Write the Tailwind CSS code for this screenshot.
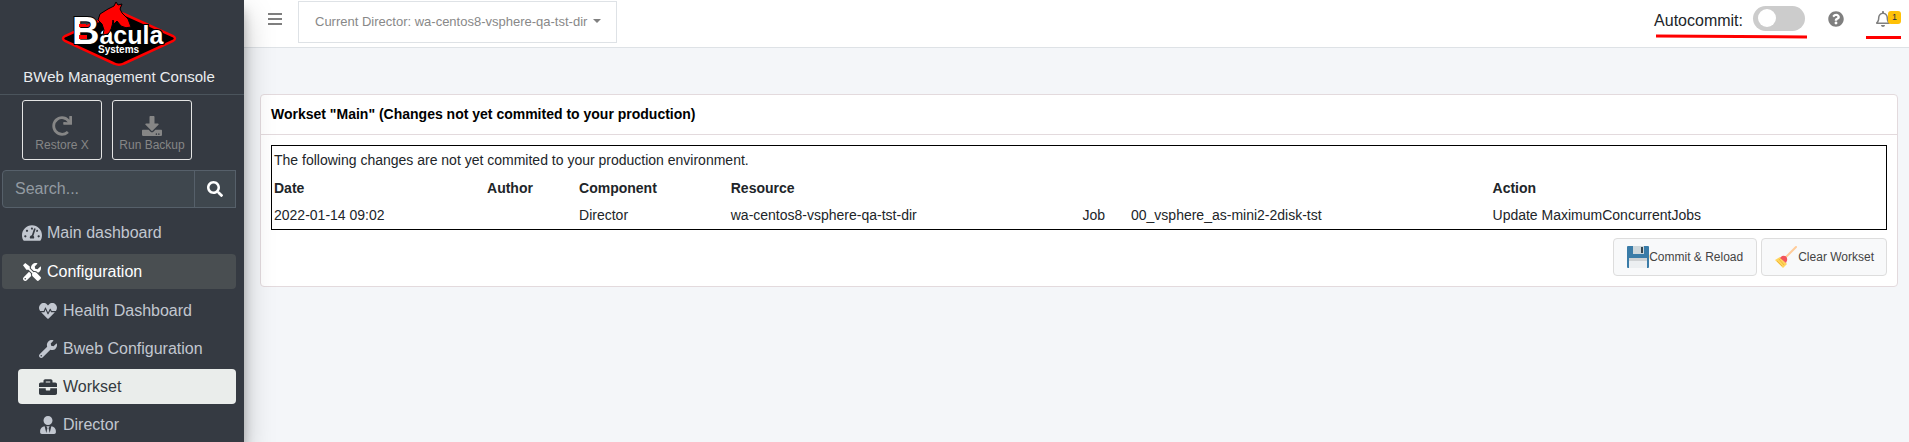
<!DOCTYPE html>
<html lang="en">
<head>
  <meta charset="UTF-8" />
  <meta name="viewport" content="width=device-width, initial-scale=1" />
  <title>BWeb Management Console - Workset</title>
  <script src="https://cdn.jsdelivr.net/npm/@tailwindcss/browser@4"></script>
</head>
<body class="flex min-h-screen overflow-x-hidden bg-[#f4f6f9] font-['Liberation_Sans',Arial,sans-serif] text-[#212529]">

  <!-- Sidebar -->
  <aside class="z-10 flex w-[244px] shrink-0 flex-col overflow-hidden bg-[#353a42] text-[#c2c7d0] shadow-[0_14px_28px_rgba(0,0,0,0.25),0_10px_10px_rgba(0,0,0,0.22)]">
    <a href="#" class="flex h-[95px] shrink-0 flex-col items-center border-b border-[#4b545c] pr-[6px]">
      <svg class="h-[69px] w-[118px]" viewBox="0 0 118 69" role="img" aria-label="Bacula Systems">
        <path d="M5 36 Q1 38.500 5 41 L54 63.500 Q59 66 64 63.500 L113 41 Q117 38.500 113 36 L64 14 Q59 12 54 14Z" fill="#000" stroke="#f00" stroke-width="2.500" />
        <g font-family="Liberation Sans" font-weight="700" fill="#fff" stroke="#000" stroke-width="2" paint-order="stroke">
          <text x="12" y="44"><tspan font-size="38">B</tspan><tspan font-size="25">acula</tspan></text>
          <text x="38" y="53" font-size="10">Systems</text>
        </g>
        <path d="M19 24h7v3h-7zM19 35h8v4h-8z" fill="#f00" />
        <path d="M43 35 L44 30 L42 24 L38 20 L40 14 L48 9 L54 6 L56 2 L58 5 L62 4 L60 9 L62 13 L68 19 L71 27 Q66 29 61 26 L57 21 L54 24 L53 20 Q52 30 48 34Z" fill="#f00" stroke="#000" stroke-linejoin="round" />
      </svg>
      <span class="text-[15px] leading-4 text-[#e9ecef]">BWeb Management Console</span>
    </a>

    <div class="mt-[5px] flex gap-[10px] pl-[22px] text-xs text-[#868686]">
      <button type="button" class="flex h-[60px] w-20 flex-col items-center justify-end rounded-[3px] border border-[#e4e4e4] pb-[5px]">
        <svg class="h-5 w-5" viewBox="0 0 512 512" fill="currentColor"><path d="M500.330 0h-47.410a12 12 0 0 0-12 12.570l4 82.760A247.420 247.420 0 0 0 256 8C119.340 8 7.900 119.530 8 256.190 8.100 393.070 119.100 504 256 504a247.100 247.100 0 0 0 166.180-63.910 12 12 0 0 0 .48-17.430l-34-34a12 12 0 0 0-16.380-.55A176 176 0 1 1 402.100 157.800l-101.530-4.870a12 12 0 0 0-12.570 12v47.410a12 12 0 0 0 12 12h200.330a12 12 0 0 0 12-12V12a12 12 0 0 0-12-12z" /></svg>
        <span class="leading-[18px]">Restore X</span>
      </button>
      <button type="button" class="flex h-[60px] w-20 flex-col items-center justify-end rounded-[3px] border border-[#e4e4e4] pb-[5px] whitespace-nowrap">
        <svg class="h-5 w-5" viewBox="0 0 512 512" fill="currentColor"><path d="M216 0h80c13.300 0 24 10.700 24 24v168h87.700c17.800 0 26.700 21.500 14.100 34.100L269.700 378.300c-7.500 7.500-19.800 7.500-27.300 0L90.100 226.100c-12.600-12.600-3.700-34.100 14.100-34.100H192V24c0-13.300 10.700-24 24-24zm296 376v112c0 13.300-10.700 24-24 24H24c-13.300 0-24-10.700-24-24V376c0-13.300 10.700-24 24-24h146.700l49 49c20.100 20.100 52.500 20.100 72.600 0l49-49H488c13.300 0 24 10.700 24 24zm-124 88c0-11-9-20-20-20s-20 9-20 20 9 20 20 20 20-9 20-20zm64 0c0-11-9-20-20-20s-20 9-20 20 9 20 20 20 20-9 20-20z" /></svg>
        <span class="leading-[18px]">Run Backup</span>
      </button>
    </div>

    <form class="mt-[10px] mr-2 ml-[2px] flex h-[38px]">
      <input type="text" aria-label="Search" placeholder="Search..." class="min-w-0 flex-1 rounded-l border border-[#56606a] bg-[#3f474e] px-3 text-base text-white placeholder:text-[#939ba2]" />
      <button type="submit" aria-label="Search" class="-ml-px flex w-[42px] items-center justify-center border border-[#56606a] bg-[#3f474e] text-white">
        <svg class="h-4 w-4" viewBox="0 0 512 512" fill="currentColor"><path d="M505 442.700L405.300 343c-4.500-4.500-10.600-7-17-7H372c27.600-35.300 44-79.700 44-128C416 93.100 322.900 0 208 0S0 93.100 0 208s93.100 208 208 208c48.300 0 92.700-16.400 128-44v16.300c0 6.400 2.500 12.500 7 17l99.700 99.700c9.400 9.400 24.600 9.400 33.900 0l28.300-28.300c9.400-9.400 9.400-24.600.1-34zM208 336c-70.700 0-128-57.200-128-128 0-70.700 57.200-128 128-128 70.700 0 128 57.200 128 128 0 70.700-57.200 128-128 128z" /></svg>
      </button>
    </form>

    <nav class="mt-[7px] mr-2 ml-[2px] flex flex-col gap-1 text-base">
      <a href="#" class="flex h-[35px] items-center gap-[5px] rounded pl-5">
        <svg class="h-[18px] w-5" viewBox="0 0 576 512" fill="currentColor"><path d="M288 32C128.940 32 0 160.940 0 320c0 52.800 14.250 102.260 39.060 144.800 5.610 9.620 16.300 15.200 27.440 15.200h443c11.140 0 21.830-5.580 27.440-15.200C561.750 422.260 576 372.800 576 320c0-159.060-128.940-288-288-288zm0 64c14.710 0 26.580 10.130 30.320 23.650-1.110 2.260-2.640 4.230-3.450 6.670l-9.220 27.670c-5.130 3.490-10.970 6.010-17.640 6.010-17.670 0-32-14.330-32-32S270.330 96 288 96zM96 384c-17.670 0-32-14.330-32-32s14.330-32 32-32 32 14.330 32 32-14.330 32-32 32zm48-160c-17.670 0-32-14.330-32-32s14.330-32 32-32 32 14.330 32 32-14.330 32-32 32zm246.770-72.410l-61.330 184C343.130 347.330 352 364.540 352 384c0 11.720-3.380 22.550-8.880 32H232.880c-5.500-9.450-8.880-20.280-8.880-32 0-33.940 26.500-61.430 59.900-63.590l61.340-184.010c4.170-12.560 17.730-19.450 30.360-15.170 12.570 4.190 19.350 17.790 15.170 30.360zm14.660 57.200l15.520-46.550c3.470-1.290 7.130-2.230 11.050-2.230 17.670 0 32 14.330 32 32s-14.330 32-32 32c-11.380 0-20.890-6.280-26.570-15.220zM480 384c-17.670 0-32-14.330-32-32s14.330-32 32-32 32 14.330 32 32-14.330 32-32 32z" /></svg>
        Main dashboard
      </a>
      <a href="#" class="flex h-[35px] items-center gap-[5px] rounded bg-[#494e51] pl-5 text-white">
        <svg class="h-[18px] w-5" viewBox="0 0 512 512" fill="currentColor"><path d="M501.100 395.700L384 278.600c-23.100-23.100-57.600-27.600-85.400-13.900L192 158.100V96L64 0 0 64l96 128h62.100l106.600 106.600c-13.600 27.800-9.200 62.300 13.900 85.400l117.100 117.100c14.600 14.600 38.200 14.600 52.700 0l52.700-52.700c14.500-14.600 14.500-38.200 0-52.700zM331.700 225c28.300 0 54.900 11 74.900 31l19.400 19.400c15.800-6.900 30.800-16.500 43.800-29.500 37.100-37.100 49.700-89.300 37.900-136.700-2.200-9-13.500-12.100-20.100-5.500l-74.400 74.400-67.900-11.300L334 98.900l74.400-74.400c6.600-6.600 3.400-17.900-5.700-20.200-47.400-11.700-99.600.9-136.600 37.900-28.500 28.500-41.900 66.100-41.200 103.600l82.100 82.100c8.100-1.900 16.500-2.900 24.700-2.900zm-103.900 82l-56.700-56.700L18.700 402.800c-25 25-25 65.500 0 90.500s65.500 25 90.500 0l123.600-123.600c-7.600-19.900-9.900-41.600-5-62.700zM64 472c-13.200 0-24-10.800-24-24 0-13.300 10.700-24 24-24s24 10.700 24 24c0 13.200-10.700 24-24 24z" /></svg>
        Configuration
      </a>
      <div class="ml-4 flex flex-col gap-[3px]">
        <a href="#" class="flex h-[35px] items-center gap-[5px] rounded pl-5">
          <svg class="h-[18px] w-5" viewBox="0 0 512 512" fill="currentColor"><path d="M320.200 243.800l-49.700 99.400c-6 12.100-23.400 11.700-28.900-.6l-56.900-126.300-30 71.700H60.600l182.500 186.500c7.100 7.300 18.600 7.300 25.700 0L451.400 288H342.300l-22.100-44.200zM473.700 73.900l-2.400-2.500c-51.500-52.600-135.800-52.600-187.400 0L256 100l-27.900-28.500c-51.500-52.700-135.900-52.700-187.400 0l-2.400 2.400C-10.400 123.700-12.500 203 31 256h102.400l35.900-86.200c5.400-12.900 23.600-13.200 29.400-.4l58.200 129.300 49-97.900c5.900-11.800 22.700-11.800 28.600 0l27.600 55.200H481c43.500-53 41.400-132.300-7.300-182.100z" /></svg>
          Health Dashboard
        </a>
        <a href="#" class="flex h-[35px] items-center gap-[5px] rounded pl-5">
          <svg class="h-[18px] w-5" viewBox="0 0 512 512" fill="currentColor"><path d="M507.730 109.100c-2.240-9.030-13.540-12.090-20.120-5.510l-74.360 74.360-67.880-11.310-11.310-67.880 74.360-74.360c6.620-6.620 3.430-17.900-5.660-20.160-47.380-11.740-99.550.91-136.580 37.930-39.640 39.640-50.550 97.100-34.050 147.200L18.740 402.760c-24.990 24.990-24.990 65.510 0 90.500 24.990 24.990 65.510 24.990 90.500 0l213.210-213.210c50.120 16.710 107.470 5.680 147.370-34.220 37.070-37.070 49.700-89.320 37.910-136.730zM64 472c-13.250 0-24-10.750-24-24 0-13.260 10.750-24 24-24s24 10.740 24 24c0 13.250-10.750 24-24 24z" /></svg>
          Bweb Configuration
        </a>
        <a href="#" class="flex h-[35px] items-center gap-[5px] rounded bg-[#eaedeb] pl-5 text-[#343a40]">
          <svg class="h-[18px] w-5" viewBox="0 0 512 512" fill="currentColor"><path d="M320 336c0 8.840-7.160 16-16 16h-96c-8.840 0-16-7.160-16-16v-48H0v144c0 25.600 22.400 48 48 48h416c25.600 0 48-22.400 48-48V288H320v48zm144-208h-80V80c0-25.600-22.400-48-48-48H176c-25.600 0-48 22.400-48 48v48H48c-25.600 0-48 22.400-48 48v80h512v-80c0-25.600-22.400-48-48-48zm-144 0H192V96h128v32z" /></svg>
          Workset
        </a>
        <a href="#" class="flex h-[35px] items-center gap-[5px] rounded pl-5">
          <svg class="h-[18px] w-5" viewBox="0 0 448 512" fill="currentColor"><path d="M224 256c70.700 0 128-57.300 128-128S294.700 0 224 0 96 57.300 96 128s57.300 128 128 128zm95.800 32.600L272 480l-32-136 32-56h-96l32 56-32 136-47.800-191.400C56.900 292 0 350.300 0 422.400V464c0 26.500 21.500 48 48 48h352c26.500 0 48-21.500 48-48v-41.600c0-72.100-56.900-130.400-128.200-133.800z" /></svg>
          Director
        </a>
      </div>
    </nav>
  </aside>

  <div class="min-w-0 flex-1">
    <!-- Top bar -->
    <header class="flex h-12 items-start justify-between border-b border-[#dee2e6] bg-white">
      <div class="flex pl-6">
        <button type="button" aria-label="Toggle menu" class="mt-3 h-4 w-[14px] text-[#7f7f7f]">
          <svg class="h-4 w-[14px]" viewBox="0 0 14 16" fill="currentColor"><path d="M0 1h14v2H0zM0 6h14v2H0zM0 11h14v2H0z" /></svg>
        </button>
        <div class="relative mt-px ml-4">
          <select aria-label="Current Director" class="h-[42px] appearance-none border border-[#dee2e6] bg-white pr-7 pl-4 text-[13px] text-[#888]">
            <option>Current Director: wa-centos8-vsphere-qa-tst-dir</option>
          </select>
          <svg class="pointer-events-none absolute top-[18px] right-4 h-1 w-2 text-[#808080]" viewBox="0 0 8 4" fill="currentColor"><path d="M0 0h8L4 4z" /></svg>
        </div>
      </div>

      <div class="flex items-start pr-2">
        <div class="relative flex pt-[6px]">
          <label for="autocommit" class="mr-[10px] pt-[3px] text-base">Autocommit:</label>
          <input id="autocommit" type="checkbox" class="h-[25px] w-[52px] appearance-none rounded-full bg-[#ccc] before:mt-[3px] before:ml-[5px] before:block before:h-[18px] before:w-[18px] before:rounded-full before:bg-white" />
          <svg class="absolute top-[34px] left-[2px] h-[5px] w-[151px]" viewBox="0 0 151 5"><path d="M0 2L151 3" stroke="#f00" stroke-width="3" /></svg>
        </div>
        <a href="#" aria-label="Help" class="mt-[11px] ml-[23px] text-[#7f7f7f]">
          <svg class="h-4 w-4" viewBox="0 0 512 512" fill="currentColor"><path d="M504 256c0 136.997-111.043 248-248 248S8 392.997 8 256C8 119.083 119.043 8 256 8s248 111.083 248 248zM262.655 90c-54.497 0-89.255 22.957-116.549 63.758-3.536 5.286-2.353 12.415 2.715 16.258l34.699 26.310c5.205 3.947 12.621 3.008 16.665-2.122 17.864-22.658 30.113-35.797 57.303-35.797 20.429 0 45.698 13.148 45.698 32.958 0 14.976-12.363 22.667-32.534 33.976C247.128 238.528 216 254.941 216 296v4c0 6.627 5.373 12 12 12h56c6.627 0 12-5.373 12-12v-1.333c0-28.462 83.186-29.647 83.186-106.667 0-58.002-60.165-102-116.531-102zM256 338c-25.365 0-46 20.635-46 46 0 25.364 20.635 46 46 46s46-20.636 46-46c0-25.365-20.635-46-46-46z" /></svg>
        </a>
        <a href="#" aria-label="Notifications" class="relative mt-[11px] ml-8 flex w-[25px] text-[#7f7f7f]">
          <svg class="h-4 w-[14px]" viewBox="0 0 448 512" fill="currentColor"><path d="M439.390 362.290c-19.320-20.760-55.470-51.990-55.470-154.290 0-77.700-54.480-139.900-127.940-155.160V32c0-17.670-14.320-32-31.980-32s-31.980 14.330-31.980 32v20.840C118.560 68.100 64.080 130.300 64.080 208c0 102.300-36.150 133.530-55.470 154.290-6 6.450-8.660 14.160-8.610 21.710.11 16.400 12.980 32 32.100 32h383.800c19.120 0 32-15.600 32.100-32 .05-7.550-2.610-15.270-8.610-21.710zM67.530 368c21.220-27.970 44.420-74.330 44.530-159.420 0-.2-.06-.38-.06-.58 0-61.860 50.140-112 112-112s112 50.140 112 112c0 .2-.06.38-.06.58.11 85.100 23.310 131.460 44.530 159.420H67.530zM224 512c35.320 0 63.970-28.650 63.970-64H160.030c0 35.350 28.650 64 63.970 64z" /></svg>
          <span class="absolute top-0 right-0 h-[13px] w-[13px] rounded-[3px] bg-[#ffc107] text-center text-[9px] leading-[13px] text-[#1f2d3d]">1</span>
          <svg class="absolute top-[25px] right-0 h-[3px] w-[35px]" viewBox="0 0 35 3"><path d="M0 0h35v3H0z" fill="#f00" /></svg>
        </a>
      </div>
    </header>

    <!-- Workset -->
    <main class="mt-[46px] mr-[11px] ml-4 rounded border border-[#e3dadd] bg-white">
      <h1 class="border-b border-[#e3dadd] px-[10px] py-[9px] text-[14px] leading-[21px] font-bold text-black">Workset "Main" (Changes not yet commited to your production)</h1>
      <div class="p-[10px]">
        <table class="w-full table-fixed border-separate border-spacing-0 border border-black text-left text-[14px]">
          <colgroup>
            <col class="w-[13.2%]" />
            <col class="w-[5.7%]" />
            <col class="w-[9.4%]" />
            <col class="w-[21.8%]" />
            <col class="w-[3%]" />
            <col class="w-[22.4%]" />
            <col />
          </colgroup>
          <tr class="h-7">
            <td colspan="7" class="px-[2px]">The following changes are not yet commited to your production environment.</td>
          </tr>
          <tr class="h-7">
            <th class="px-[2px]">Date</th>
            <th class="px-[2px]">Author</th>
            <th class="px-[2px]">Component</th>
            <th class="px-[2px]" colspan="3">Resource</th>
            <th class="px-[2px]">Action</th>
          </tr>
          <tr class="h-[27px]">
            <td class="px-[2px]">2022-01-14 09:02</td>
            <td class="px-[2px]"></td>
            <td class="px-[2px]">Director</td>
            <td class="px-[2px]">wa-centos8-vsphere-qa-tst-dir</td>
            <td class="px-[2px]">Job</td>
            <td class="px-[2px]">00_vsphere_as-mini2-2disk-tst</td>
            <td class="px-[2px]">Update MaximumConcurrentJobs</td>
          </tr>
        </table>
        <div class="mt-2 flex justify-end gap-1 text-xs text-[#444]">
          <button type="button" class="flex h-[38px] items-center rounded border border-[#ddd] bg-[#f8f9fa] px-[13px]">
            <svg class="h-[22px] w-[22px]" viewBox="0 0 22 22">
              <path d="M0 1Q0 0 1 0H21Q22 0 22 1V21Q22 22 21 22H1Q0 22 0 21Z" fill="#3a7ca8" />
              <path d="M6 0h11v8H6z" fill="#cfd8dc" />
              <path d="M14 1h2v6h-2z" fill="#37474f" />
              <path d="M2 12h18v10H2z" fill="#eceff1" />
              <path d="M2 12h18v3H2z" fill="#cfd2d4" />
            </svg>
            Commit &amp; Reload
          </button>
          <button type="button" class="flex h-[38px] items-center rounded border border-[#ddd] bg-[#f8f9fa] px-3">
            <svg class="h-6 w-6" viewBox="0 0 24 24">
              <path d="M22 2L11 13" stroke="#ffcc99" stroke-width="2" stroke-linecap="round" />
              <path d="M6 12L13 19L9 23L1 15Z" fill="#ffd45c" />
              <path d="M3 16l5 5M5 14l5 6" stroke="#f0b93a" />
              <path d="M8 11Q12 10 13 13Q14 15 12 18L6 13Z" fill="#f2545b" />
            </svg>
            Clear Workset
          </button>
        </div>
      </div>
    </main>
  </div>
</body>
</html>
